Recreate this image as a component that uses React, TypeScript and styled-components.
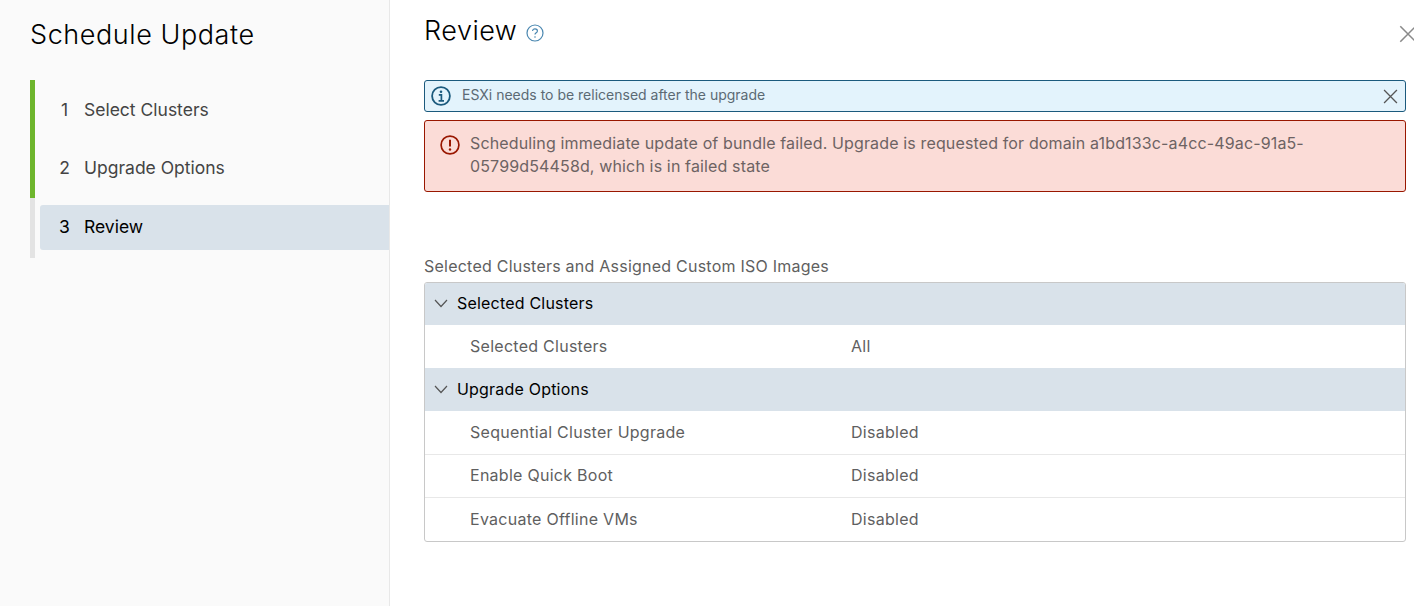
import React from "react";
import styled, { createGlobalStyle } from "styled-components";

const Global = createGlobalStyle`
  html, body { margin: 0; padding: 0; height: 606px; overflow: hidden; background: #fff; }
  body { font-family: Inter, "Liberation Sans", sans-serif; color: #565656; }
  * { box-sizing: border-box; }
`;

const Page = styled.div`
  display: flex;
  width: 1414px;
  height: 606px;
  overflow: hidden;
`;

const Sidebar = styled.aside`
  flex: 0 0 390px;
  height: 100%;
  background: #fafafa;
  border-right: 1px solid #e8e8e8;
  padding: 16px 0 0 30px;
`;

const SideTitle = styled.h1`
  margin: 0 0 27px;
  font-size: 27px;
  line-height: 37px;
  font-weight: 300;
  letter-spacing: 0.57px;
  color: #000;
`;

const Steps = styled.ol`
  list-style: none;
  margin: 0;
  padding: 0;
  display: flex;
  flex-direction: column;
`;

const Step = styled.li<{ $done?: boolean; $active?: boolean; $h: number }>`
  height: ${(p) => p.$h}px;
  border-left: 5px solid ${(p) => (p.$done ? "#6db52d" : "#e3e3e3")};
  padding: ${(p) => (p.$active ? "7px 0 8px 5px" : "0 0 0 5px")};
  display: flex;
`;

const StepLink = styled.div<{ $active?: boolean; $lift?: number }>`
  flex: 1;
  display: flex;
  align-items: center;
  border-radius: 3px 0 0 3px;
  padding: 0 0 ${(p) => p.$lift ?? 0}px 19px;
  font-size: 17.5px;
  letter-spacing: 0;
  background: ${(p) => (p.$active ? "#d9e2ea" : "transparent")};
  color: ${(p) => (p.$active ? "#000" : "#444")};
`;

const StepNum = styled.span`
  width: 11px;
  margin-right: 14px;
  display: flex;
  justify-content: center;
`;

const Main = styled.main`
  flex: 1;
  min-width: 0;
  padding: 0 8px 0 34px;
`;

const Header = styled.header`
  display: flex;
  align-items: center;
  height: 64px;
  padding-bottom: 4px;
`;

const Title = styled.h2`
  margin: 0;
  font-size: 27px;
  line-height: 37px;
  font-weight: 300;
  letter-spacing: 0.5px;
  color: #000;
`;

const Help = styled.span`
  display: flex;
  margin: 6px 0 0 9px;
  color: #4a87b0;
`;

const Close = styled.button`
  display: flex;
  margin: 8px -11px 0 auto;
  padding: 0;
  border: 0;
  background: none;
  color: #8a8a8a;
`;

const Alerts = styled.div`
  margin-top: 16px;
  display: flex;
  flex-direction: column;
  gap: 8px;
`;

const InfoAlert = styled.div`
  height: 32px;
  display: flex;
  align-items: center;
  padding: 0 7px 0 6px;
  background: #e3f3fc;
  border: 1px solid #1b5a7d;
  border-radius: 3px;
  font-size: 14px;
  color: #5b6a74;
`;

const InfoText = styled.span`
  margin-left: 11px;
  padding-bottom: 3px;
  flex: 1;
`;

const AlertClose = styled.span`
  display: flex;
  color: #565656;
`;

const DangerAlert = styled.div`
  height: 72px;
  display: flex;
  align-items: flex-start;
  padding: 11px 15px 0 15px;
  background: #fbdcd7;
  border: 1px solid #991700;
  border-radius: 3px;
  font-size: 16px;
  line-height: 23px;
  letter-spacing: 0.14px;
  color: #6d6363;
`;

const DangerIcon = styled.span`
  display: flex;
  margin: 3px 10px 0 0;
  color: #991700;
`;

const DangerText = styled.p`
  margin: 0;
  width: 860px;
`;

const Caption = styled.div`
  margin-top: 64px;
  font-size: 16px;
  line-height: 20px;
  height: 26px;
  letter-spacing: 0.23px;
  color: #5f5f5f;
`;

const Table = styled.section`
  border: 1px solid #c8c8c8;
  border-radius: 3px;
  overflow: hidden;
  height: 260px;
`;

const GroupRow = styled.div<{ $h: number; $lift: number }>`
  height: ${(p) => p.$h}px;
  display: flex;
  align-items: center;
  padding: 0 0 ${(p) => p.$lift}px 9px;
  background: #d9e2ea;
  font-size: 16px;
  letter-spacing: 0.2px;
  color: #000;
`;

const Chevron = styled.span`
  display: flex;
  width: 23px;
  color: #565656;
`;

const DataRow = styled.div<{ $h: number; $rule?: boolean; $lift: number }>`
  height: ${(p) => p.$h}px;
  display: flex;
  align-items: center;
  padding: 0 0 ${(p) => p.$lift}px 45px;
  font-size: 16px;
  letter-spacing: 0.27px;
  color: #5f5f5f;
  border-bottom: ${(p) => (p.$rule ? "1px solid #e8e8e8" : "0")};
`;

const RowLabel = styled.span`
  width: 381px;
`;

const ChevronIcon = () => (
  <svg width="14" height="14" viewBox="0 0 14 14" fill="none" stroke="currentColor" strokeWidth="1.2">
    <path d="M1 4l6 6.5L13 4" />
  </svg>
);

const XIcon = ({ size }: { size: number }) => (
  <svg width={size} height={size} viewBox="0 0 14 14" fill="none" stroke="currentColor" strokeWidth="1.2">
    <path d="M1 1l12 12M13 1L1 13" />
  </svg>
);

export default function App() {
  return (
    <Page>
      <Global />
      <Sidebar>
        <SideTitle>Schedule Update</SideTitle>
        <Steps>
          <Step $done $h={58}>
            <StepLink><StepNum>1</StepNum>Select Clusters</StepLink>
          </Step>
          <Step $done $h={60}>
            <StepLink $lift={2}><StepNum>2</StepNum>Upgrade Options</StepLink>
          </Step>
          <Step $active $h={60}>
            <StepLink $active $lift={2}><StepNum>3</StepNum>Review</StepLink>
          </Step>
        </Steps>
      </Sidebar>
      <Main>
        <Header>
          <Title>Review</Title>
          <Help>
            <svg width="18" height="18" viewBox="0 0 18 18" fill="none" stroke="currentColor" strokeWidth="1.2">
              <circle cx="9" cy="9" r="8" />
              <path d="M6.6 7.1c0-1.5 1.1-2.3 2.4-2.3s2.4.8 2.4 2.1c0 1.9-2.4 1.8-2.4 3.7" />
              <circle cx="9" cy="13" r=".8" fill="currentColor" stroke="none" />
            </svg>
          </Help>
          <Close aria-label="Close"><XIcon size={18} /></Close>
        </Header>
        <Alerts>
          <InfoAlert>
            <svg width="20" height="20" viewBox="0 0 20 20" fill="none" stroke="#1b5a7d" strokeWidth="1.8">
              <circle cx="10" cy="10" r="8.9" />
              <circle cx="10" cy="5.8" r="1.3" fill="#1b5a7d" stroke="none" />
              <path d="M7.8 8.8H10.4V14.6M7.6 14.8h5.4" strokeWidth="1.7" />
            </svg>
            <InfoText>ESXi needs to be relicensed after the upgrade</InfoText>
            <AlertClose><XIcon size={15} /></AlertClose>
          </InfoAlert>
          <DangerAlert>
            <DangerIcon>
              <svg width="20" height="20" viewBox="0 0 20 20" fill="none" stroke="currentColor" strokeWidth="1.7">
                <circle cx="10" cy="10" r="8.9" />
                <path d="M10 4.8v6.6" strokeWidth="2" />
                <circle cx="10" cy="14.5" r="1.2" fill="currentColor" stroke="none" />
              </svg>
            </DangerIcon>
            <DangerText>
              Scheduling immediate update of bundle failed. Upgrade is requested for domain a1bd133c-a4cc-49ac-91a5-05799d54458d, which is in failed state
            </DangerText>
          </DangerAlert>
        </Alerts>
        <Caption>Selected Clusters and Assigned Custom ISO Images</Caption>
        <Table>
          <GroupRow $h={42} $lift={2}><Chevron><ChevronIcon /></Chevron>Selected Clusters</GroupRow>
          <DataRow $h={43} $lift={1}><RowLabel>Selected Clusters</RowLabel>All</DataRow>
          <GroupRow $h={43} $lift={1}><Chevron><ChevronIcon /></Chevron>Upgrade Options</GroupRow>
          <DataRow $h={44} $rule $lift={1}><RowLabel>Sequential Cluster Upgrade</RowLabel>Disabled</DataRow>
          <DataRow $h={43} $rule $lift={2}><RowLabel>Enable Quick Boot</RowLabel>Disabled</DataRow>
          <DataRow $h={43} $lift={1}><RowLabel>Evacuate Offline VMs</RowLabel>Disabled</DataRow>
        </Table>
      </Main>
    </Page>
  );
}
